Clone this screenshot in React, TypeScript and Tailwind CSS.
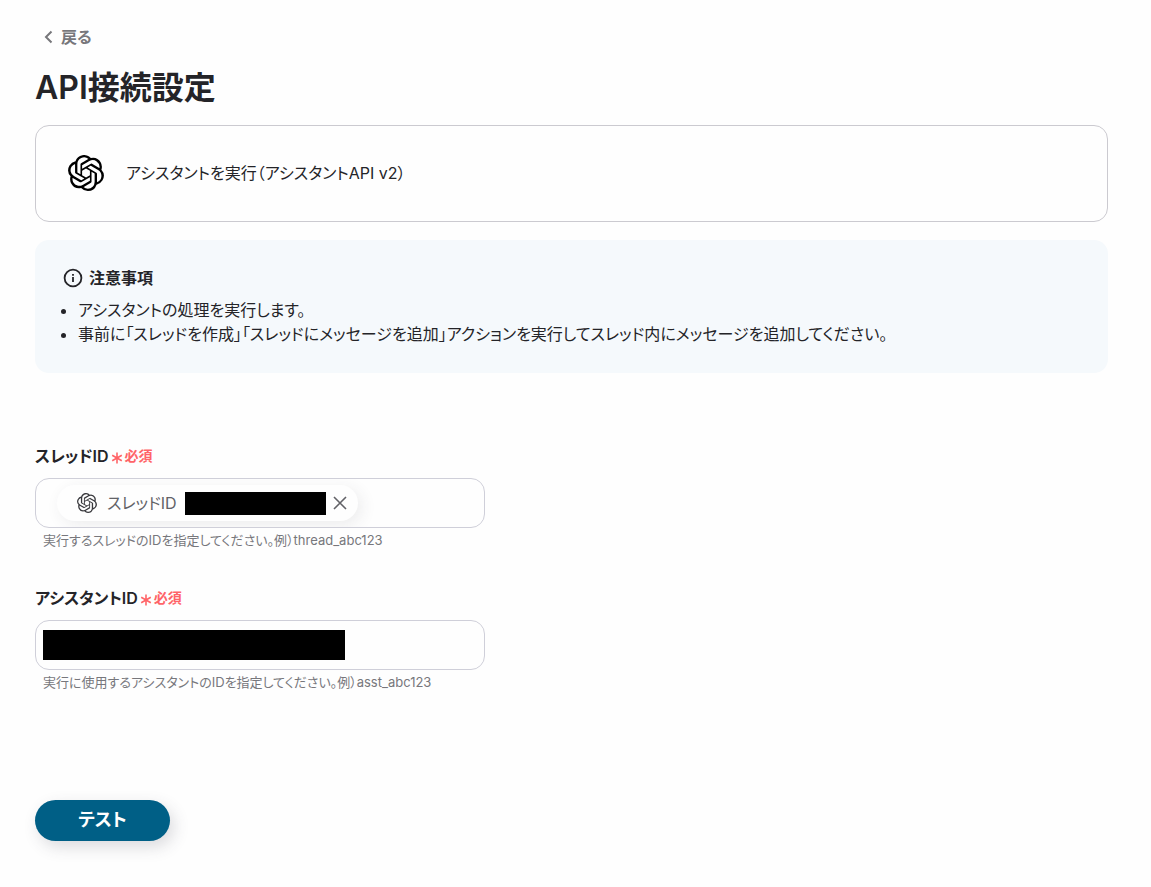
import { ReactNode } from "react";
import { SiOpenai } from "react-icons/si";

type FieldProps = {
  id: string;
  label: string;
  hint: string;
  children: ReactNode;
};

const notes: string[] = [
  "アシスタントの処理を実行します。",
  "事前に「スレッドを作成」「スレッドにメッセージを追加」アクションを実行してスレッド内にメッセージを追加してください。",
];

const Field: React.FC<FieldProps> = ({ id, label, hint, children }) => {
  return (
    <div className="max-w-[450px]">
      <div className="flex h-6 items-center gap-[2px]">
        <label htmlFor={id} className="text-base font-semibold">
          {label}
        </label>
        <span className="flex items-center gap-[2px] text-sm font-semibold text-[#ff6468]">
          <svg
            viewBox="0 0 12 12"
            className="mt-1 size-3"
            stroke="currentColor"
            strokeWidth="1.6"
          >
            <path d="M6 .5v11M1.2 3.2l9.6 5.6M10.8 3.2L1.2 8.8" />
          </svg>
          必須
        </span>
      </div>
      <div className="mt-[10px] flex h-[50px] items-center overflow-hidden rounded-[14px] border border-[#cfcfd9] bg-[#fefefe] px-[7px]">
        {children}
      </div>
      <p className="mt-[2px] pl-2 text-[13px] leading-5 text-[#77777c]">
        {hint}
      </p>
    </div>
  );
};

const App: React.FC = () => {
  return (
    <main
      lang="ja"
      className="min-h-screen bg-[#fefefe] pt-[25px] pr-[43px] pb-10 pl-[35px] font-['Inter','Noto_Sans_CJK_JP',sans-serif] text-[#242428] [font-feature-settings:'palt']"
    >
      <a
        href="#"
        className="ml-2 inline-flex h-6 items-center gap-2 text-base font-semibold text-[#77777b]"
      >
        <svg
          viewBox="0 0 10 14"
          className="h-[14px] w-[10px]"
          fill="none"
          stroke="currentColor"
          strokeWidth="2"
        >
          <path d="M8.5 1.5L3 7L8.5 12.5" />
        </svg>
        戻る
      </a>
      <h1 className="mt-[14px] text-[32px] leading-12 font-semibold">
        API接続設定
      </h1>

      <section className="mt-[13px] flex h-[97px] items-center gap-[22px] rounded-[14px] border border-[#cbcad0] px-8 pb-[2px]">
        <SiOpenai className="size-9 text-black" />
        <p className="text-base">アシスタントを実行（アシスタントAPI v2）</p>
      </section>

      {/* notice */}
      <section className="mt-[18px] rounded-[14px] bg-[#f5f9fc] px-7 pt-[26px] pb-[27px]">
        <h2 className="flex items-center gap-[6px] text-base font-semibold">
          <svg
            viewBox="0 0 20 20"
            className="size-5"
            fill="none"
            stroke="currentColor"
            strokeWidth="1.8"
          >
            <circle cx="10" cy="10" r="8.4" />
            <path d="M10 9v5M10 6v1.8" />
          </svg>
          注意事項
        </h2>
        <ul className="mt-2 list-disc pl-[15px] text-base">
          {notes.map((note: string) => (
            <li key={note}>{note}</li>
          ))}
        </ul>
      </section>

      <form className="mt-[71px]">
        <Field
          id="thread-id"
          label="スレッドID"
          hint="実行するスレッドのIDを指定してください。例）thread_abc123"
        >
          <span className="ml-[14px] flex h-9 shrink-0 items-center rounded-full bg-[#fefefe] pr-[10px] pl-5 text-[#626267] shadow-[4px_4px_16px_rgba(60,50,70,0.09)]">
            <SiOpenai className="size-5 text-[#39393d]" />
            <span className="ml-[10px] w-[78px]">スレッドID</span>
            <span className="h-[23px] w-[141px] bg-black" />
            <button type="button" aria-label="削除" className="ml-[6px] p-[1px]">
              <svg
                viewBox="0 0 14 14"
                className="size-[14px]"
                stroke="currentColor"
                strokeWidth="1.6"
              >
                <path d="M1 1l12 12M13 1L1 13" />
              </svg>
            </button>
          </span>
          <input
            id="thread-id"
            type="text"
            className="h-full min-w-0 flex-1 bg-transparent outline-none"
          />
        </Field>

        <div className="mt-9">
          <Field
            id="assistant-id"
            label="アシスタントID"
            hint="実行に使用するアシスタントのIDを指定してください。例）asst_abc123"
          >
            <span className="h-[30px] w-[302px] shrink-0 bg-black" />
            <input
              id="assistant-id"
              type="text"
              className="h-full min-w-0 flex-1 bg-transparent outline-none"
            />
          </Field>
        </div>

        <button
          type="button"
          className="mt-[108px] flex h-[41px] w-[135px] items-center justify-center rounded-full bg-[#005f86] pb-[2px] text-lg font-bold text-white shadow-[4px_6px_16px_rgba(60,60,80,0.18)]"
        >
          テスト
        </button>
      </form>
    </main>
  );
};

export default App;
